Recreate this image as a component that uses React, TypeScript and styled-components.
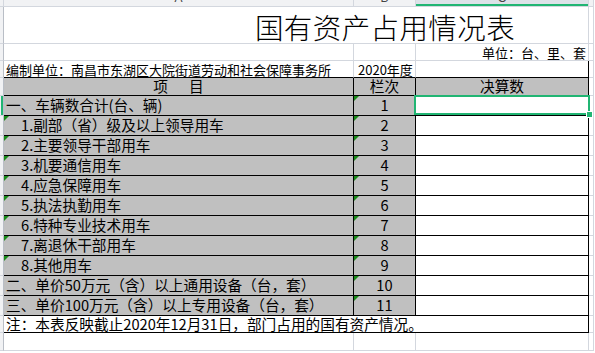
import React from "react";
import styled, { createGlobalStyle } from "styled-components";

const GRAY = "#c0c0c0";
const GRID = "#d3d7de";
const INK = "#000";
const GREEN = "#21b573";
const FLAG = "#1a8c1a";

type Line = "ink" | "grid" | "none";

const lineColor = (l: Line) =>
  l === "ink" ? INK : l === "grid" ? GRID : "transparent";

const GlobalStyle = createGlobalStyle`
  html, body {
    margin: 0;
    padding: 0;
    background: #fff;
  }
  body {
    font-family: "Noto Sans CJK SC", "Noto Sans", sans-serif;
    color: #000;
  }
`;

const Sheet = styled.div`
  width: 595px;
  height: 353px;
  overflow: hidden;
  display: grid;
  grid-template-columns: 4px 350px 62px 173px 5px 1px;
  grid-template-rows: 7px 37px 17px 17px 18px repeat(11, 20px) 17px 18px 2px;
`;

const ColHead = styled.div<{ $active?: boolean }>`
  box-sizing: border-box;
  overflow: hidden;
  display: flex;
  align-items: flex-end;
  justify-content: center;
  background: ${(p) => (p.$active ? "#dde2e8" : "#f1f2f4")};
  border-right: 1px solid ${GRID};
  border-bottom: 1px solid ${GRID};
  box-shadow: ${(p) => (p.$active ? `inset 0 -2px 0 ${GREEN}` : "none")};
  font-family: "Liberation Sans", Arial, sans-serif;
  font-size: 12px;
  color: #444;

  span {
    line-height: 12px;
    margin-bottom: 2px;
  }
`;

const RowHead = styled.div<{ $active?: boolean }>`
  box-sizing: border-box;
  background: #f1f2f4;
  border-right: 1px solid #b9bec6;
  border-bottom: 1px solid ${GRID};
  box-shadow: ${(p) => (p.$active ? `inset -2px 0 0 ${GREEN}` : "none")};
`;

const Cell = styled.div<{
  $fill?: string;
  $right?: Line;
  $bottom?: Line;
  $span?: number;
  $align?: "flex-start" | "center" | "flex-end";
  $size?: number;
  $pad?: number;
  $flag?: boolean;
  $raised?: boolean;
}>`
  box-sizing: border-box;
  position: relative;
  z-index: ${(p) => (p.$raised ? 2 : "auto")};
  grid-column: span ${(p) => p.$span ?? 1};
  display: flex;
  align-items: center;
  justify-content: ${(p) => p.$align ?? "flex-start"};
  padding: 0 2px 0 ${(p) => p.$pad ?? 2}px;
  background: ${(p) => p.$fill ?? "#fff"};
  border-right: 1px solid ${(p) => lineColor(p.$right ?? "grid")};
  border-bottom: 1px solid ${(p) => lineColor(p.$bottom ?? "grid")};
  font-size: ${(p) => p.$size ?? 14.67}px;
  line-height: 1;
  white-space: pre;

  &::before {
    content: "";
    display: ${(p) => (p.$flag ? "block" : "none")};
    position: absolute;
    top: 0;
    left: 0;
    border-top: 5px solid ${FLAG};
    border-right: 5px solid transparent;
  }
`;

const Selection = styled.span`
  position: absolute;
  top: -1px;
  left: -2px;
  right: -2px;
  bottom: 0;
  border: 2px solid ${GREEN};
  pointer-events: none;
`;

const Handle = styled.span`
  position: absolute;
  right: -5px;
  bottom: -3px;
  width: 5px;
  height: 5px;
  background: ${GREEN};
  border: 1px solid #fff;
`;

const TitleCell = styled.div`
  box-sizing: border-box;
  grid-column: span 3;
  display: grid;
  grid-template-columns: 350px 62px 1fr;
  border-right: 1px solid ${GRID};
  border-bottom: 1px solid ${GRID};
`;

const TitleSlot = styled.div`
  grid-column: 2;
  display: flex;
  justify-content: center;
  align-items: flex-end;
  padding-bottom: 2px;
`;

const Title = styled.h1`
  margin: 0;
  font-size: 28.5px;
  font-weight: 300;
  line-height: 1;
  letter-spacing: 0.4px;
  white-space: nowrap;
`;

const Blank = styled.div`
  box-sizing: border-box;
  border-right: 1px solid ${GRID};
  border-bottom: 1px solid ${GRID};
`;

interface Item {
  label: string;
  no: number;
  sub?: boolean;
}

const items: Item[] = [
  { label: "一、车辆数合计(台、辆)", no: 1 },
  { label: "1.副部（省）级及以上领导用车", no: 2, sub: true },
  { label: "2.主要领导干部用车", no: 3, sub: true },
  { label: "3.机要通信用车", no: 4, sub: true },
  { label: "4.应急保障用车", no: 5, sub: true },
  { label: "5.执法执勤用车", no: 6, sub: true },
  { label: "6.特种专业技术用车", no: 7, sub: true },
  { label: "7.离退休干部用车", no: 8, sub: true },
  { label: "8.其他用车", no: 9, sub: true },
  { label: "二、单价50万元（含）以上通用设备（台，套）", no: 10 },
  { label: "三、单价100万元（含）以上专用设备（台，套）", no: 11 },
];

const App = () => {
  return (
    <>
      <GlobalStyle />
      <Sheet>
        {/* column letters */}
        <ColHead />
        <ColHead>
          <span>A</span>
        </ColHead>
        <ColHead>
          <span>B</span>
        </ColHead>
        <ColHead $active>
          <span>C</span>
        </ColHead>
        <ColHead />
        <div />

        {/* title */}
        <RowHead />
        <TitleCell>
          <TitleSlot>
            <Title>国有资产占用情况表</Title>
          </TitleSlot>
        </TitleCell>
        <Blank />
        <div />

        {/* unit */}
        <RowHead />
        <Cell />
        <Cell />
        <Cell $align="flex-end" $size={13}>
          单位：台、里、套
        </Cell>
        <Blank />
        <div />

        {/* compiler */}
        <RowHead />
        <Cell $size={13} $bottom="ink">
          编制单位：南昌市东湖区大院街道劳动和社会保障事务所
        </Cell>
        <Cell $size={13} $bottom="ink" $pad={4}>
          2020年度
        </Cell>
        <Cell $bottom="ink" $right="ink" />
        <Blank />
        <div />

        {/* table head */}
        <RowHead />
        <Cell $fill={GRAY} $right="ink" $bottom="ink" $align="center">
          {"项\u3000  目"}
        </Cell>
        <Cell $fill={GRAY} $right="ink" $bottom="ink" $align="center">
          栏次
        </Cell>
        <Cell $fill={GRAY} $right="ink" $bottom="ink" $align="center">
          决算数
        </Cell>
        <Blank />
        <div />

        {items.map((it) => (
          <React.Fragment key={it.no}>
            <RowHead $active={it.no === 1} />
            <Cell
              $fill={GRAY}
              $right="ink"
              $bottom="ink"
              $pad={it.sub ? 17 : 2}
              $flag={it.sub}
            >
              {it.label}
            </Cell>
            <Cell $fill={GRAY} $right="ink" $bottom="ink" $align="center" $flag>
              {it.no}
            </Cell>
            <Cell $right="ink" $bottom="ink" $raised={it.no === 1}>
              {it.no === 1 && (
                <>
                  <Selection />
                  <Handle />
                </>
              )}
            </Cell>
            <Blank />
            <div />
          </React.Fragment>
        ))}

        {/* note */}
        <RowHead />
        <Cell $span={3} $right="ink" $bottom="ink">
          注：本表反映截止2020年12月31日，部门占用的国有资产情况。
        </Cell>
        <Blank />
        <div />

        {/* empty row */}
        <RowHead />
        <Cell />
        <Cell />
        <Cell />
        <Blank />
        <div />
      </Sheet>
    </>
  );
};

export default App;
